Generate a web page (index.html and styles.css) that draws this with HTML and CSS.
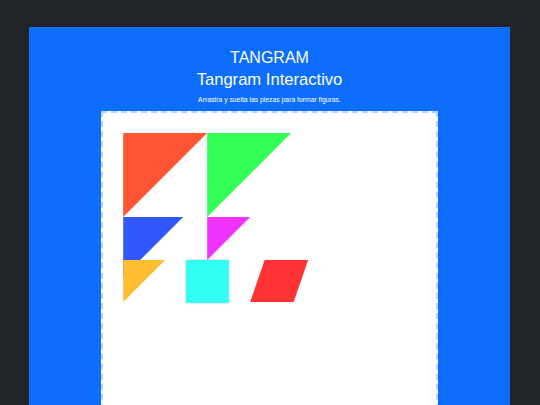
FILE: index.html
```html
<!DOCTYPE html>
<html lang="es">

<head>
    <meta charset="UTF-8">
    <title>Tangram</title>
    <link rel="stylesheet" href="styles.css">
</head>

<body>
    <div class="app">
        <h1>TANGRAM</h1>
        <h2>Tangram Interactivo</h2>
        <p class="hint">Arrastra y suelta las piezas para formar figuras.</p>

        <!-- tablero con las piezas -->
        <div class="board" id="board">
            <div class="piece big-1"></div>
            <div class="piece big-2"></div>
            <div class="piece medium"></div>
            <div class="piece small-1"></div>
            <div class="piece small-2"></div>
            <div class="piece square"></div>
            <div class="piece parallelogram"></div>
        </div>
    </div>
</body>

</html>
```

FILE: styles.css
```css
html,
body {
    margin: 0;
    padding: 0;
    height: 100%;
    overflow: hidden;
    background: #212529;
    font-family: 'Liberation Sans', Arial, sans-serif;
    color: white;
}

.app {
    margin: 27px 30px 0 29px;
    padding-top: 21px;
    height: calc(100% - 48px);
    overflow: hidden;
    background: #0d6efd;
    text-align: center;
}

h1 {
    margin: 0;
    font-size: 16px;
    line-height: 20px;
    font-weight: normal;
}

h2 {
    margin: 1px 0 0;
    font-size: 16.6px;
    line-height: 22px;
    font-weight: normal;
}

.hint {
    margin: 4px 0 0;
    font-size: 6.8px;
    line-height: 10px;
}

.board {
    position: relative;
    width: 70%;
    height: 400px;
    margin: 6px auto 0;
    background: white;
    border: 2px dashed #b8d3f7;
    box-sizing: border-box;
}

.piece {
    position: absolute;
    cursor: grab;
}

.big-1,
.big-2,
.medium,
.small-1,
.small-2 {
    clip-path: polygon(0 0, 100% 0, 0 100%);
}

.big-1 {
    left: 20px;
    top: 20px;
    width: 84px;
    height: 84px;
    background: #ff5733;
}

.big-2 {
    left: 104px;
    top: 20px;
    width: 84px;
    height: 84px;
    background: #33ff57;
}

.medium {
    left: 20px;
    top: 104px;
    width: 60px;
    height: 60px;
    background: #3357ff;
}

.small-1 {
    left: 104px;
    top: 104px;
    width: 43px;
    height: 43px;
    background: #f033ff;
}

.small-2 {
    left: 20px;
    top: 147px;
    width: 42px;
    height: 42px;
    background: #ffbd33;
}

.square {
    left: 83px;
    top: 147px;
    width: 43px;
    height: 43px;
    background: #33fff5;
    box-shadow: 0 0 2px rgba(0, 0, 0, 0.25);
}

.parallelogram {
    left: 147px;
    top: 147px;
    width: 58px;
    height: 42px;
    background: #ff3333;
    clip-path: polygon(25% 0, 100% 0, 75% 100%, 0 100%);
}
```
